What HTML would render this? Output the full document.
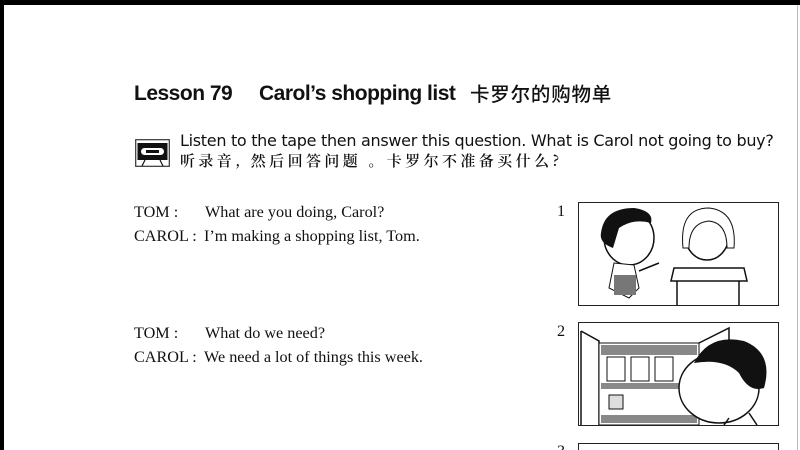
<!DOCTYPE html>
<html><head><meta charset="utf-8"><style>
html,body{margin:0;width:800px;height:450px;overflow:hidden;background:#fff}
body{position:relative;font-family:"Liberation Serif",serif;color:#111}
.a{position:absolute;white-space:nowrap;line-height:1.2}
.sans{font-family:"Liberation Sans","Noto Sans CJK SC",sans-serif}
.cjk{font-family:"Noto Serif CJK SC","Noto Sans CJK SC",serif}
.t{font-size:16.2px}
.box{position:absolute;border:1.5px solid #222;left:578px;width:199px}
</style></head><body>
<div class="a" style="left:0;top:0;width:800px;height:5px;background:#000"></div>
<div class="a" style="left:0;top:0;width:4px;height:450px;background:#000"></div>
<div class="a" style="left:797px;top:5px;width:1px;height:445px;background:#bbb"></div>

<div class="a sans" style="left:134px;top:82px;font-size:21px;font-weight:bold;line-height:24px;letter-spacing:-0.5px">Lesson 79</div>
<div class="a sans" style="left:259px;top:82px;font-size:21px;font-weight:bold;line-height:24px;letter-spacing:-0.5px">Carol’s shopping list</div>
<div class="a" style="left:470px;top:81px;font-family:'Noto Sans CJK SC',sans-serif;font-size:19.5px;font-weight:500;line-height:24px;letter-spacing:0.8px">卡罗尔的购物单</div>

<svg class="a" style="left:135px;top:139px" width="35" height="28" viewBox="0 0 35 28">
<rect x="0.7" y="0.7" width="33.6" height="26.6" fill="#fff" stroke="#333" stroke-width="1.2"/>
<rect x="2.5" y="4" width="30" height="17" fill="#111"/>
<rect x="6" y="9" width="23" height="7" rx="3.5" fill="#fff"/>
<rect x="11" y="11" width="13" height="3" fill="#111"/>
<path d="M7 27 L10 21 M28 27 L25 21" stroke="#111" stroke-width="1.2"/>
</svg>
<div class="a" style="left:180px;top:131px;font-family:'DejaVu Sans',sans-serif;font-size:16px;letter-spacing:-0.3px">Listen to the tape then answer this question. What is Carol not going to buy?</div>
<div class="a cjk" style="left:180px;top:152px;font-size:15px;font-weight:600;letter-spacing:3.4px">听录音, 然后回答问题 。卡罗尔不准备买什么?</div>

<div class="a t" style="left:134px;top:203px">TOM :</div>
<div class="a t" style="left:205px;top:203px">What are you doing, Carol?</div>
<div class="a t" style="left:134px;top:227px">CAROL :</div>
<div class="a t" style="left:204px;top:227px">I’m making a shopping list, Tom.</div>
<div class="a t" style="left:557px;top:202px">1</div>

<div class="a t" style="left:134px;top:324px">TOM :</div>
<div class="a t" style="left:205px;top:324px">What do we need?</div>
<div class="a t" style="left:134px;top:348px">CAROL :</div>
<div class="a t" style="left:204px;top:348px">We need a lot of things this week.</div>
<div class="a t" style="left:557px;top:322px">2</div>
<div class="a t" style="left:557px;top:442px">3</div>

<div class="box" style="top:202px;height:102px">
<svg width="199" height="102" viewBox="0 0 199 102">
<ellipse cx="50" cy="35" rx="25" ry="27" fill="#fff" stroke="#111" stroke-width="1.5"/>
<path d="M22 30 Q25 5 55 5 Q75 8 72 20 Q55 15 40 25 L34 45 Q20 40 22 30Z" fill="#111"/>
<path d="M35 60 L30 85 L50 95 L60 85 L55 62 Z" fill="#fff" stroke="#111"/>
<rect x="35" y="72" width="22" height="20" fill="#777"/>
<path d="M60 68 L80 60" stroke="#111" stroke-width="1.5"/>
<ellipse cx="128" cy="32" rx="22" ry="25" fill="#fff" stroke="#111" stroke-width="1.5"/>
<path d="M104 45 Q100 5 130 5 Q158 8 155 45 L148 45 Q148 20 130 18 Q110 20 110 45Z" fill="#fff" stroke="#111"/>
<path d="M95 65 L165 65 L168 78 L92 78 Z" fill="#fff" stroke="#111" stroke-width="1.5"/>
<path d="M98 78 L98 102 M160 78 L160 102" stroke="#111" stroke-width="1.5"/>
</svg></div>

<div class="box" style="top:322px;height:102px">
<svg width="199" height="102" viewBox="0 0 199 102">
<path d="M2 8 L20 18 L20 102 M2 8 L2 102" fill="none" stroke="#111" stroke-width="1.5"/>
<rect x="20" y="20" width="100" height="82" fill="#fff" stroke="#111"/>
<rect x="22" y="22" width="96" height="10" fill="#888"/>
<rect x="22" y="60" width="96" height="6" fill="#888"/>
<rect x="22" y="92" width="96" height="8" fill="#888"/>
<rect x="28" y="34" width="18" height="24" fill="#fff" stroke="#111"/>
<rect x="52" y="34" width="18" height="24" fill="#fff" stroke="#111"/>
<rect x="76" y="34" width="18" height="24" fill="#fff" stroke="#111"/>
<rect x="30" y="72" width="14" height="14" fill="#ddd" stroke="#111"/>
<path d="M120 20 L150 5 L150 30" fill="none" stroke="#111" stroke-width="1.5"/>
<ellipse cx="140" cy="65" rx="40" ry="35" fill="#fff" stroke="#111" stroke-width="1.5"/>
<path d="M115 40 Q130 10 165 18 Q195 30 185 65 Q170 70 160 50 Q145 35 115 40Z" fill="#111"/>
<path d="M150 95 L145 102 M170 90 L178 102" stroke="#111" stroke-width="1.5"/>
</svg></div>

<div class="box" style="top:443px;height:20px"></div>
</body></html>
